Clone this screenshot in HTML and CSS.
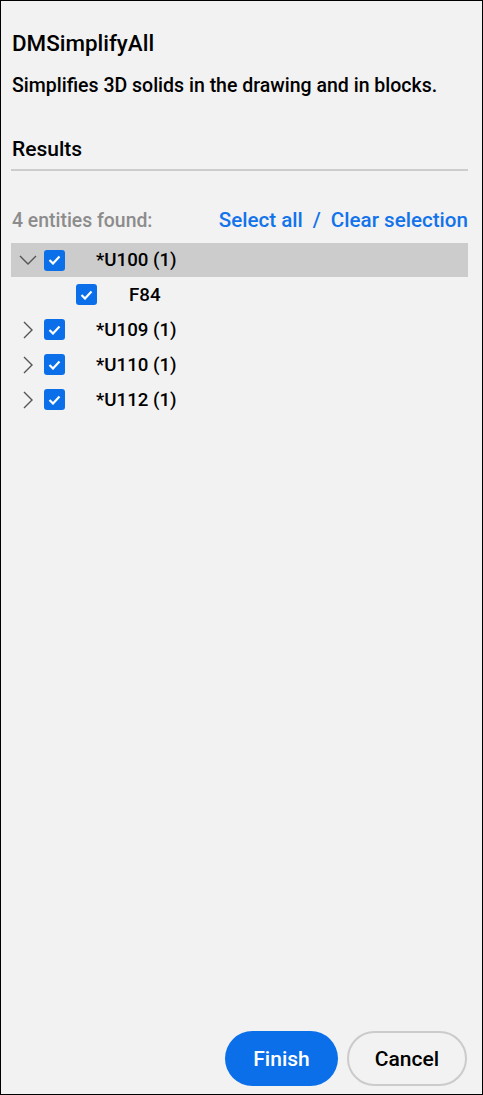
FILE: index.html
```html
<!DOCTYPE html>
<html>
<head>
<meta charset="utf-8">
<link rel="stylesheet" href="styles.css">
</head>
<body>
<div class="panel">
  <div class="content">
    <h1 class="title">DMSimplifyAll</h1>
    <p class="desc">Simplifies 3D solids in the drawing and in blocks.</p>
    <h2 class="section">Results</h2>
    <div class="divider"></div>
    <div class="found-bar">
      <span class="found">4 entities found:</span>
      <span class="links"><a class="link">Select all</a><span class="slash">/</span><a class="link">Clear selection</a></span>
    </div>
    <ul class="tree">
      <li class="row selected">
        <span class="chev"><svg width="18" height="10" viewBox="0 0 18 10"><path d="M1 1 L9 9 L17 1" fill="none" stroke="#555" stroke-width="1.4"/></svg></span>
        <span class="cb"><svg width="13" height="10" viewBox="0 0 13 10"><path d="M1.5 5 L5 8.5 L11.5 1.5" fill="none" stroke="#fff" stroke-width="2.2"/></svg></span>
        <span class="label">*U100 (1)</span>
      </li>
      <li class="row child">
        <span class="cb"><svg width="13" height="10" viewBox="0 0 13 10"><path d="M1.5 5 L5 8.5 L11.5 1.5" fill="none" stroke="#fff" stroke-width="2.2"/></svg></span>
        <span class="label">F84</span>
      </li>
      <li class="row">
        <span class="chev"><svg width="18" height="18" viewBox="0 0 18 18"><path d="M5 1 L13 9 L5 17" fill="none" stroke="#555" stroke-width="1.4"/></svg></span>
        <span class="cb"><svg width="13" height="10" viewBox="0 0 13 10"><path d="M1.5 5 L5 8.5 L11.5 1.5" fill="none" stroke="#fff" stroke-width="2.2"/></svg></span>
        <span class="label">*U109 (1)</span>
      </li>
      <li class="row">
        <span class="chev"><svg width="18" height="18" viewBox="0 0 18 18"><path d="M5 1 L13 9 L5 17" fill="none" stroke="#555" stroke-width="1.4"/></svg></span>
        <span class="cb"><svg width="13" height="10" viewBox="0 0 13 10"><path d="M1.5 5 L5 8.5 L11.5 1.5" fill="none" stroke="#fff" stroke-width="2.2"/></svg></span>
        <span class="label">*U110 (1)</span>
      </li>
      <li class="row">
        <span class="chev"><svg width="18" height="18" viewBox="0 0 18 18"><path d="M5 1 L13 9 L5 17" fill="none" stroke="#555" stroke-width="1.4"/></svg></span>
        <span class="cb"><svg width="13" height="10" viewBox="0 0 13 10"><path d="M1.5 5 L5 8.5 L11.5 1.5" fill="none" stroke="#fff" stroke-width="2.2"/></svg></span>
        <span class="label">*U112 (1)</span>
      </li>
    </ul>
  </div>
  <div class="footer">
    <button class="btn primary">Finish</button>
    <button class="btn secondary">Cancel</button>
  </div>
</div>
</body>
</html>
```

FILE: styles.css
```css
html, body {
  margin: 0;
  padding: 0;
}
body {
  width: 483px;
  height: 1095px;
  font-family: Roboto, "Liberation Sans", sans-serif;
  color: #000;
}
.panel {
  box-sizing: border-box;
  width: 483px;
  height: 1095px;
  border: 1px solid #000;
  background: #f2f2f2;
  display: flex;
  flex-direction: column;
}
.content {
  flex: 1;
  padding: 0 14px 0 10px;
}
.title {
  margin: 28px 0 0 1px;
  font-size: 22.4px;
  font-weight: 500;
  line-height: 28px;
}
.desc {
  margin: 17px 0 0 1px;
  font-size: 19.5px;
  font-weight: 500;
  line-height: 24px;
}
.section {
  margin: 37px 0 0 1px;
  font-size: 21px;
  font-weight: 500;
  line-height: 28px;
}
.divider {
  height: 2px;
  background: #cdcdcd;
  margin-top: 6px;
}
.found-bar {
  display: flex;
  justify-content: space-between;
  align-items: baseline;
  margin-top: 37px;
  padding-left: 1px;
  height: 28px;
}
.found {
  font-size: 19.4px;
  font-weight: 500;
  color: #8c8c8c;
}
.links {
  font-size: 20.6px;
  font-weight: 500;
  color: #1273eb;
}
.slash {
  margin: 0 10px;
}
.tree {
  list-style: none;
  margin: 7px 0 0 0;
  padding: 0;
}
.row {
  height: 35px;
  display: flex;
  align-items: center;
  font-size: 18.7px;
  font-weight: 500;
}
.row.selected {
  background: #cccccc;
  height: 34px;
}
.chev {
  width: 18px;
  margin-left: 8px;
  margin-right: 7px;
  display: flex;
  align-items: center;
  justify-content: center;
}
.cb {
  width: 21px;
  height: 21px;
  border-radius: 3px;
  background: #0b6fe9;
  display: flex;
  align-items: center;
  justify-content: center;
  flex: none;
}
.label {
  margin-left: 31px;
}
.child .cb {
  margin-left: 65px;
}
.child .label {
  margin-left: 32px;
}
.footer {
  display: flex;
  justify-content: flex-end;
  gap: 9px;
  padding: 0 15px 8px 0;
}
.btn {
  font-family: Roboto, "Liberation Sans", sans-serif;
  font-size: 21px;
  font-weight: 500;
  height: 55px;
  border-radius: 28px;
  cursor: pointer;
}
.primary {
  width: 113px;
  background: #0b6fe9;
  color: #fff;
  border: none;
}
.secondary {
  width: 120px;
  background: #f2f2f2;
  color: #000;
  border: 2px solid #cbcbcb;
}
```
